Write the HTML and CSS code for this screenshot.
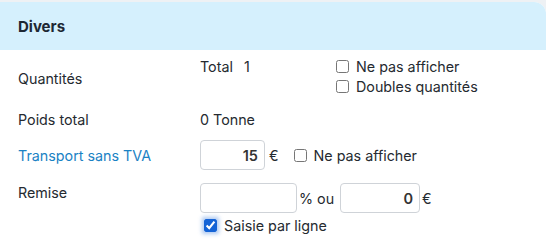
FILE: index.html
```html
<!DOCTYPE html>
<html lang="fr">

<head>
    <meta charset="UTF-8">
    <meta name="viewport" content="width=device-width, initial-scale=1.0">
    <title>Divers</title>
    <link rel="stylesheet" href="styles.css">
</head>

<body>
    <section class="panel">
        <header class="panel-head">
            <h2>Divers</h2>
        </header>

        <div class="panel-body">
            <div class="row row-qty">
                <div class="label">Quantités</div>
                <div class="value">
                    <span class="total">Total <span class="total-num">1</span></span>
                    <div class="checks">
                        <label class="check"><input type="checkbox"> Ne pas afficher</label>
                        <label class="check"><input type="checkbox"> Doubles quantités</label>
                    </div>
                </div>
            </div>

            <div class="row row-weight">
                <div class="label">Poids total</div>
                <div class="value">0 Tonne</div>
            </div>

            <div class="row row-transport">
                <div class="label link">Transport sans TVA</div>
                <div class="value">
                    <input class="field field-sm" type="text" value="15">
                    <span class="unit">€</span>
                    <label class="check"><input type="checkbox"> Ne pas afficher</label>
                </div>
            </div>

            <div class="row row-discount">
                <div class="label">Remise</div>
                <div class="value value-col">
                    <div class="inline">
                        <input class="field field-md" type="text" value="">
                        <span class="unit">% ou</span>
                        <input class="field field-lg" type="text" value="0">
                        <span class="unit">€</span>
                    </div>
                    <label class="check check-on"><input type="checkbox" checked> Saisie par ligne</label>
                </div>
            </div>
        </div>
    </section>
</body>

</html>
```

FILE: styles.css
```css
/* General styles */
body {
    font-family: Inter, 'Noto Sans', sans-serif;
    font-size: 14.3px;
    margin: 0;
    padding: 0;
    background-color: #eef1f4;
    color: #252a30;
}

.panel {
    margin-top: 2px;
    background-color: #ffffff;
    border-top-right-radius: 12px;
    min-height: 244px;
}

.panel-head {
    background-color: #d5f0fd;
    height: 48px;
    display: flex;
    align-items: center;
    padding-left: 18px;
    border-top-right-radius: 12px;
}

.panel-head h2 {
    margin: 0;
    font-size: 15px;
    font-weight: 700;
    color: #1d2733;
}

.panel-body {
    padding: 8px 0 0 18px;
}

.row {
    display: flex;
    align-items: center;
}

.label {
    width: 182px;
    flex-shrink: 0;
}

.label.link {
    color: #1a82c4;
}

.value {
    display: flex;
    align-items: center;
}

/* Quantités */
.row-qty {
    height: 40px;
}

.row-qty .value {
    align-items: flex-start;
    align-self: stretch;
}

.total {
    width: 136px;
}

.total-num {
    margin-left: 7px;
}

.checks {
    display: flex;
    flex-direction: column;
    gap: 3px;
}

.check {
    display: flex;
    align-items: center;
    gap: 7px;
}

.check input {
    margin: 0;
    width: 13px;
    height: 13px;
    accent-color: #1463d6;
}

/* Poids */
.row-weight {
    margin-top: 10px;
    height: 22px;
}

/* Transport */
.row-transport {
    margin-top: 10px;
}

.field {
    box-sizing: border-box;
    height: 30px;
    border: 1px solid #cfd3d8;
    border-radius: 4px;
    font-family: inherit;
    font-size: 14.5px;
    font-weight: 600;
    color: #333;
    text-align: right;
    padding: 0 6px;
}

.field-sm {
    width: 65px;
}

.field-md {
    width: 97px;
}

.field-lg {
    width: 80px;
}

.unit {
    margin: 0 6px 0 4px;
}

.row-transport .check {
    margin-left: 9px;
}

/* Remise */
.row-discount {
    margin-top: 13px;
    align-items: flex-start;
}

.row-discount .label {
    margin-top: 1px;
}

.value-col {
    flex-direction: column;
    align-items: flex-start;
}

.inline {
    display: flex;
    align-items: center;
}

.inline .unit {
    margin: 0 6px 0 2px;
}

.check-on {
    margin: 4px 0 0 4px;
}

.check-on input {
    box-shadow: 0 0 4px 2px rgba(20, 99, 214, 0.35);
    border-radius: 2px;
}
```
